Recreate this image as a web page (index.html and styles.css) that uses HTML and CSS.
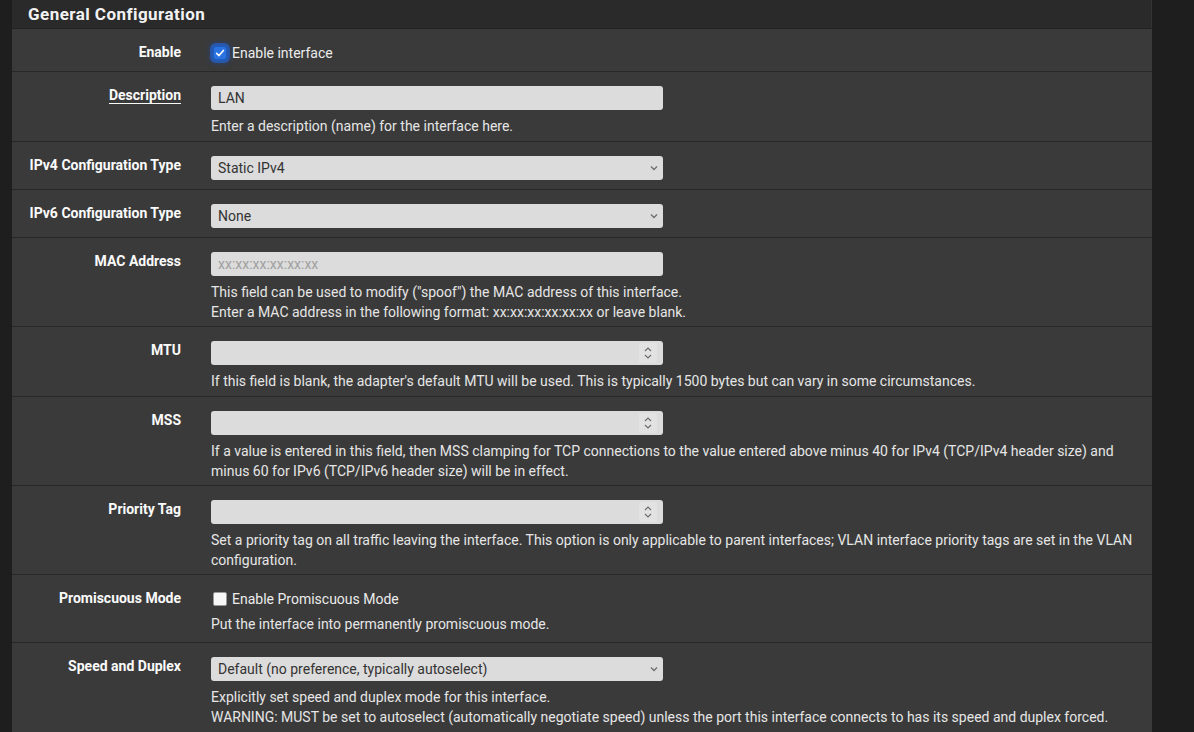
FILE: index.html
```html
<!DOCTYPE html>
<html>
<head>
<meta charset="utf-8">
<link rel="stylesheet" href="styles.css">
</head>
<body>
<div class="panel">
  <div class="panel-heading">General Configuration</div>

  <div class="row">
    <div class="label">Enable</div>
    <div class="ctrl">
      <label class="check"><span class="box checked"><svg width="10" height="10" viewBox="0 0 10 10"><path d="M1.6 5.3 L4 7.6 L8.4 2.4" fill="none" stroke="#fff" stroke-width="1.6" stroke-linecap="round" stroke-linejoin="round"/></svg></span>Enable interface</label>
    </div>
  </div>

  <div class="row">
    <div class="label"><span class="u">Description</span></div>
    <div class="ctrl">
      <div class="input">LAN</div>
      <div class="help">Enter a description (name) for the interface here.</div>
    </div>
  </div>

  <div class="row">
    <div class="label">IPv4 Configuration Type</div>
    <div class="ctrl">
      <div class="input select">Static IPv4<svg class="caret" width="8" height="6" viewBox="0 0 8 6"><path d="M1 1.5 L4 4.5 L7 1.5" fill="none" stroke="#6e6e6e" stroke-width="1.3"/></svg></div>
    </div>
  </div>

  <div class="row">
    <div class="label">IPv6 Configuration Type</div>
    <div class="ctrl">
      <div class="input select">None<svg class="caret" width="8" height="6" viewBox="0 0 8 6"><path d="M1 1.5 L4 4.5 L7 1.5" fill="none" stroke="#6e6e6e" stroke-width="1.3"/></svg></div>
    </div>
  </div>

  <div class="row">
    <div class="label">MAC Address</div>
    <div class="ctrl">
      <div class="input placeholder">xx:xx:xx:xx:xx:xx</div>
      <div class="help">This field can be used to modify ("spoof") the MAC address of this interface.<br>Enter a MAC address in the following format: xx:xx:xx:xx:xx:xx or leave blank.</div>
    </div>
  </div>

  <div class="row">
    <div class="label">MTU</div>
    <div class="ctrl">
      <div class="input number"><span class="spin"><svg width="8" height="14" viewBox="0 0 8 14"><path d="M1 5 L4 2 L7 5 M1 9 L4 12 L7 9" fill="none" stroke="#6e6e6e" stroke-width="1.2"/></svg></span></div>
      <div class="help">If this field is blank, the adapter's default MTU will be used. This is typically 1500 bytes but can vary in some circumstances.</div>
    </div>
  </div>

  <div class="row">
    <div class="label">MSS</div>
    <div class="ctrl">
      <div class="input number"><span class="spin"><svg width="8" height="14" viewBox="0 0 8 14"><path d="M1 5 L4 2 L7 5 M1 9 L4 12 L7 9" fill="none" stroke="#6e6e6e" stroke-width="1.2"/></svg></span></div>
      <div class="help">If a value is entered in this field, then MSS clamping for TCP connections to the value entered above minus 40 for IPv4 (TCP/IPv4 header size) and minus 60 for IPv6 (TCP/IPv6 header size) will be in effect.</div>
    </div>
  </div>

  <div class="row">
    <div class="label">Priority Tag</div>
    <div class="ctrl">
      <div class="input number"><span class="spin"><svg width="8" height="14" viewBox="0 0 8 14"><path d="M1 5 L4 2 L7 5 M1 9 L4 12 L7 9" fill="none" stroke="#6e6e6e" stroke-width="1.2"/></svg></span></div>
      <div class="help">Set a priority tag on all traffic leaving the interface. This option is only applicable to parent interfaces; VLAN interface priority tags are set in the VLAN configuration.</div>
    </div>
  </div>

  <div class="row">
    <div class="label">Promiscuous Mode</div>
    <div class="ctrl">
      <label class="check"><span class="box"></span>Enable Promiscuous Mode</label>
      <div class="help help-check">Put the interface into permanently promiscuous mode.</div>
    </div>
  </div>

  <div class="row">
    <div class="label">Speed and Duplex</div>
    <div class="ctrl">
      <div class="input select">Default (no preference, typically autoselect)<svg class="caret" width="8" height="6" viewBox="0 0 8 6"><path d="M1 1.5 L4 4.5 L7 1.5" fill="none" stroke="#6e6e6e" stroke-width="1.3"/></svg></div>
      <div class="help">Explicitly set speed and duplex mode for this interface.<br>WARNING: MUST be set to autoselect (automatically negotiate speed) unless the port this interface connects to has its speed and duplex forced.</div>
    </div>
  </div>
</div>
</body>
</html>
```

FILE: styles.css
```css
* { box-sizing: border-box; }
html, body {
  margin: 0;
  padding: 0;
  background: #1e1e1e;
  font-family: Roboto, "Liberation Sans", sans-serif;
  font-size: 14px;
  color: #e8e8e8;
  height: 732px;
  overflow: hidden;
}
.panel {
  margin-left: 12px;
  width: 1140px;
  background: #3a3a3a;
}
.panel-heading {
  height: 29px;
  background: #2a2a2a;
  border-bottom: 1px solid #222;
  border-right: 1px solid #333;
  padding: 4px 16px 0;
  font-size: 17px;
  font-weight: 700;
  color: #f2f2f2;
  letter-spacing: 0.45px;
  line-height: 20px;
}
.row {
  display: grid;
  grid-template-columns: 184px 1fr;
  padding: 14px 0 9.25px;
  border-bottom: 1px solid #282828;
  background: #3a3a3a;
}
.label {
  text-align: right;
  padding-right: 15px;
  font-weight: 700;
  color: #fafafa;
  line-height: 20px;
  margin-top: -1px;
}
.u {
  text-decoration: underline;
  text-underline-offset: 3px;
}
.ctrl {
  padding: 0 15px;
}
.input {
  position: relative;
  width: 452px;
  height: 24px;
  background: #dcdcdc;
  border-radius: 3px;
  color: #333;
  padding-left: 7px;
  line-height: 24px;
  font-size: 14px;
}
.placeholder {
  color: #a0a0a0;
}
.caret {
  position: absolute;
  right: 5px;
  top: 9px;
}
.spin {
  position: absolute;
  right: 6px;
  top: 2px;
  width: 18px;
  height: 20px;
  background: #e2e2e2;
  border-radius: 2px;
  display: flex;
  align-items: center;
  justify-content: center;
}
.help {
  margin: 6px 0 -5px;
  line-height: 20px;
  color: #e6e6e6;
}
.help-check {
  margin-bottom: -0.5px;
}
.check {
  display: flex;
  align-items: center;
  height: 20px;
  margin-bottom: -1.5px;
  gap: 5px;
  color: #ececec;
}
.box {
  width: 14px;
  height: 14px;
  margin-left: 2px;
  border-radius: 2px;
  background: #f7f7f7;
  border: 1px solid #9a9a9a;
  display: flex;
  align-items: center;
  justify-content: center;
}
.box.checked {
  background: #2a72e0;
  border: 1px solid #1c5fc4;
  border-radius: 3px;
  box-shadow: 0 0 0 3px rgba(35, 105, 225, 0.6), 0 0 4px 4px rgba(20, 80, 200, 0.3);
}
```
